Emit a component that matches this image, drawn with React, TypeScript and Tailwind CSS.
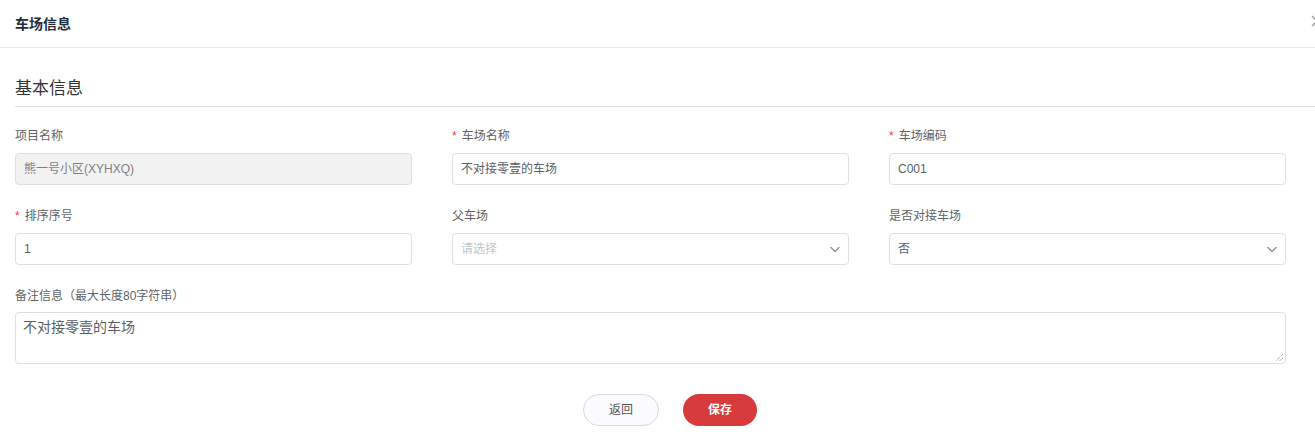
import React from "react";

const font = { fontFamily: '"Liberation Sans", "Noto Sans CJK SC", sans-serif' };

function Label({ text, required }: { text: string; required?: boolean }) {
  return (
    <div className="flex h-[16px] items-center text-[12px] leading-[16px] text-[#606266] mb-[9px]">
      {required && <span className="text-[#f04134] mr-[5px] text-[12px] leading-[16px]">*</span>}
      <span>{text}</span>
    </div>
  );
}

function Chevron() {
  return (
    <svg width="10" height="7" viewBox="0 0 10 7" fill="none">
      <path d="M1 1.5 L5 5.5 L9 1.5" stroke="#8a8f99" strokeWidth="1.3" strokeLinecap="round" strokeLinejoin="round" />
    </svg>
  );
}

function Input({ value, disabled, placeholder, select }: { value?: string; disabled?: boolean; placeholder?: boolean; select?: boolean }) {
  return (
    <div
      className={`flex h-[32px] items-center justify-between rounded-[4px] border border-[#dcdfe6] pl-[8px] pr-[8px] text-[12px] ${
        disabled ? "bg-[#f2f2f2] text-[#7d7f84]" : "bg-white text-[#5a5e66]"
      } ${placeholder ? "text-[#c0c4cc]" : ""}`}
    >
      <span>{value}</span>
      {select && <Chevron />}
    </div>
  );
}

export default function App() {
  return (
    <div className="relative w-[1315px] h-[439px] overflow-hidden bg-white" style={font}>
      <div className="box-border h-[48px] border-b border-[#e8e8e8] pl-[15px] pt-[12px]">
        <span className="text-[14px] leading-[16px] font-bold text-[#1f2d3d]">车场信息</span>
      </div>
      <svg className="absolute left-[1311px] top-[15px]" width="12" height="12" viewBox="0 0 12 12">
        <path d="M1 1 L11 11 M11 1 L1 11" stroke="#9a9a9a" strokeWidth="1.4" />
      </svg>

      <div className="ml-[15px] mt-[29px] box-border h-[30px] border-b border-[#dcdcdc]">
        <span className="text-[17px] leading-[24px] text-[#333]">基本信息</span>
      </div>

      <div className="pl-[15px] pr-[29px] pt-[21px]">
        <div className="grid grid-cols-3 gap-x-[40px] gap-y-[23px]">
          <div>
            <Label text="项目名称" />
            <Input value="熊一号小区(XYHXQ)" disabled />
          </div>
          <div>
            <Label text="车场名称" required />
            <Input value="不对接零壹的车场" />
          </div>
          <div>
            <Label text="车场编码" required />
            <Input value="C001" />
          </div>
          <div>
            <Label text="排序序号" required />
            <Input value="1" />
          </div>
          <div>
            <Label text="父车场" />
            <Input value="请选择" placeholder select />
          </div>
          <div>
            <Label text="是否对接车场" />
            <Input value="否" select />
          </div>
        </div>

        <div className="mt-[23px]">
          <div className="flex h-[16px] items-center text-[12px] leading-[16px] text-[#606266] mb-[8px]">
            备注信息（最大长度80字符串）
          </div>
          <div className="relative box-border h-[52px] rounded-[4px] border border-[#dcdfe6] px-[7px] pt-[4px] text-[14px] leading-[20px] text-[#5a5e66]">
            不对接零壹的车场
            <svg className="absolute right-[1px] bottom-[1px]" width="9" height="9" viewBox="0 0 9 9">
              <path d="M8 1 L1 8 M8 4.5 L4.5 8" stroke="#777" strokeWidth="1" strokeDasharray="1 1" />
            </svg>
          </div>
        </div>

        <div className="mt-[30px] flex justify-center gap-[24px] pl-[39px]">
          <button className="h-[32px] w-[76px] rounded-full border border-[#d9d6e3] bg-[#fbfaff] text-[12px] text-[#555]">
            返回
          </button>
          <button className="h-[32px] w-[74px] rounded-full bg-[#d63a3b] text-[12px] font-bold text-white">
            保存
          </button>
        </div>
      </div>
    </div>
  );
}
